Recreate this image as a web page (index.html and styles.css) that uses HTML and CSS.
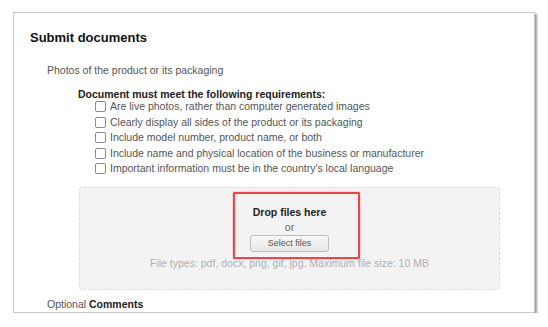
FILE: index.html
```html
<!DOCTYPE html>
<html lang="en">
<head>
    <meta charset="UTF-8">
    <meta name="viewport" content="width=device-width, initial-scale=1.0">
    <title>Submit documents</title>
    <link rel="stylesheet" href="styles.css">
</head>
<body>
    <div class="card">
        <h2 class="title">Submit documents</h2>
        <div class="section">
            <p class="label">Photos of the product or its packaging</p>

            <div class="reqs">
                <p class="reqs-title">Document must meet the following requirements:</p>
                <ul class="checklist">
                    <li><span class="box"></span>Are live photos, rather than computer generated images</li>
                    <li><span class="box"></span>Clearly display all sides of the product or its packaging</li>
                    <li><span class="box"></span>Include model number, product name, or both</li>
                    <li><span class="box"></span>Include name and physical location of the business or manufacturer</li>
                    <li><span class="box"></span>Important information must be in the country's local language</li>
                </ul>
            </div>

            <div class="dropzone">
                <p class="drop-title">Drop files here</p>
                <p class="or">or</p>
                <button class="select">Select files</button>
                <p class="types">File types: pdf, docx, png, gif, jpg. Maximum file size: 10 MB</p>
                <div class="highlight"></div>
            </div>

            <p class="comments"><span class="optional">Optional</span> <b>Comments</b></p>
        </div>
    </div>
</body>
</html>
```

FILE: styles.css
```css
body {
    margin: 0;
    background: white;
    font-family: "Liberation Sans", Arial, sans-serif;
}
p {
    margin: 0;
}
.card {
    margin: 12px 0 0 13px;
    width: 520px;
    height: 299px;
    background: white;
    border: 1px solid #c9c9c9;
    box-shadow: 2px 2px 2px rgba(0,0,0,0.4);
    overflow: hidden;
}
.title {
    margin: 17px 0 0 16px;
    font-size: 13px;
    line-height: 16px;
    font-weight: bold;
    color: #111;
}
.section {
    padding-left: 33px;
}
.label {
    margin-top: 17px;
    font-size: 10.5px;
    line-height: 14px;
    color: #555;
}
.reqs {
    margin: 11px 0 0 31px;
}
.reqs-title {
    font-size: 10.5px;
    line-height: 12px;
    font-weight: bold;
    color: #222;
}
.checklist {
    list-style: none;
    margin: -1px 0 0 17px;
    padding: 0;
}
.checklist li {
    display: flex;
    align-items: center;
    gap: 4px;
    font-size: 10.5px;
    line-height: 15.5px;
    color: #555;
}
.box {
    width: 9px;
    height: 9px;
    border: 1px solid #8a8a8a;
    border-radius: 2px;
    background: white;
}
.dropzone {
    position: relative;
    margin: 10px 0 0 32px;
    width: 419px;
    height: 84px;
    padding-top: 17px;
    background: #f3f3f3;
    border: 1px dashed #dcdcdc;
    border-radius: 4px;
    display: flex;
    flex-direction: column;
    align-items: center;
}
.drop-title {
    font-size: 10.5px;
    line-height: 14px;
    font-weight: bold;
    color: #222;
}
.or {
    margin-top: 2px;
    font-size: 10.5px;
    line-height: 12px;
    color: #666;
}
.select {
    margin-top: 2px;
    width: 79px;
    height: 17px;
    padding: 0;
    font-family: inherit;
    font-size: 9px;
    color: #555;
    background: linear-gradient(#f9f9f9, #e7e7e7);
    border: 1px solid #bdbdbd;
    border-radius: 3px;
}
.types {
    margin-top: 4px;
    font-size: 10.5px;
    line-height: 14px;
    color: #b0b0b0;
}
.highlight {
    position: absolute;
    left: 153px;
    top: 4px;
    width: 123px;
    height: 63px;
    border: 2px solid #e5474d;
    border-radius: 1px;
    box-shadow: 0 0 2px rgba(229,71,77,0.5);
}
.comments {
    margin-top: 8px;
    font-size: 10.5px;
    line-height: 13px;
    color: #555;
}
.comments b {
    color: #222;
}
```
